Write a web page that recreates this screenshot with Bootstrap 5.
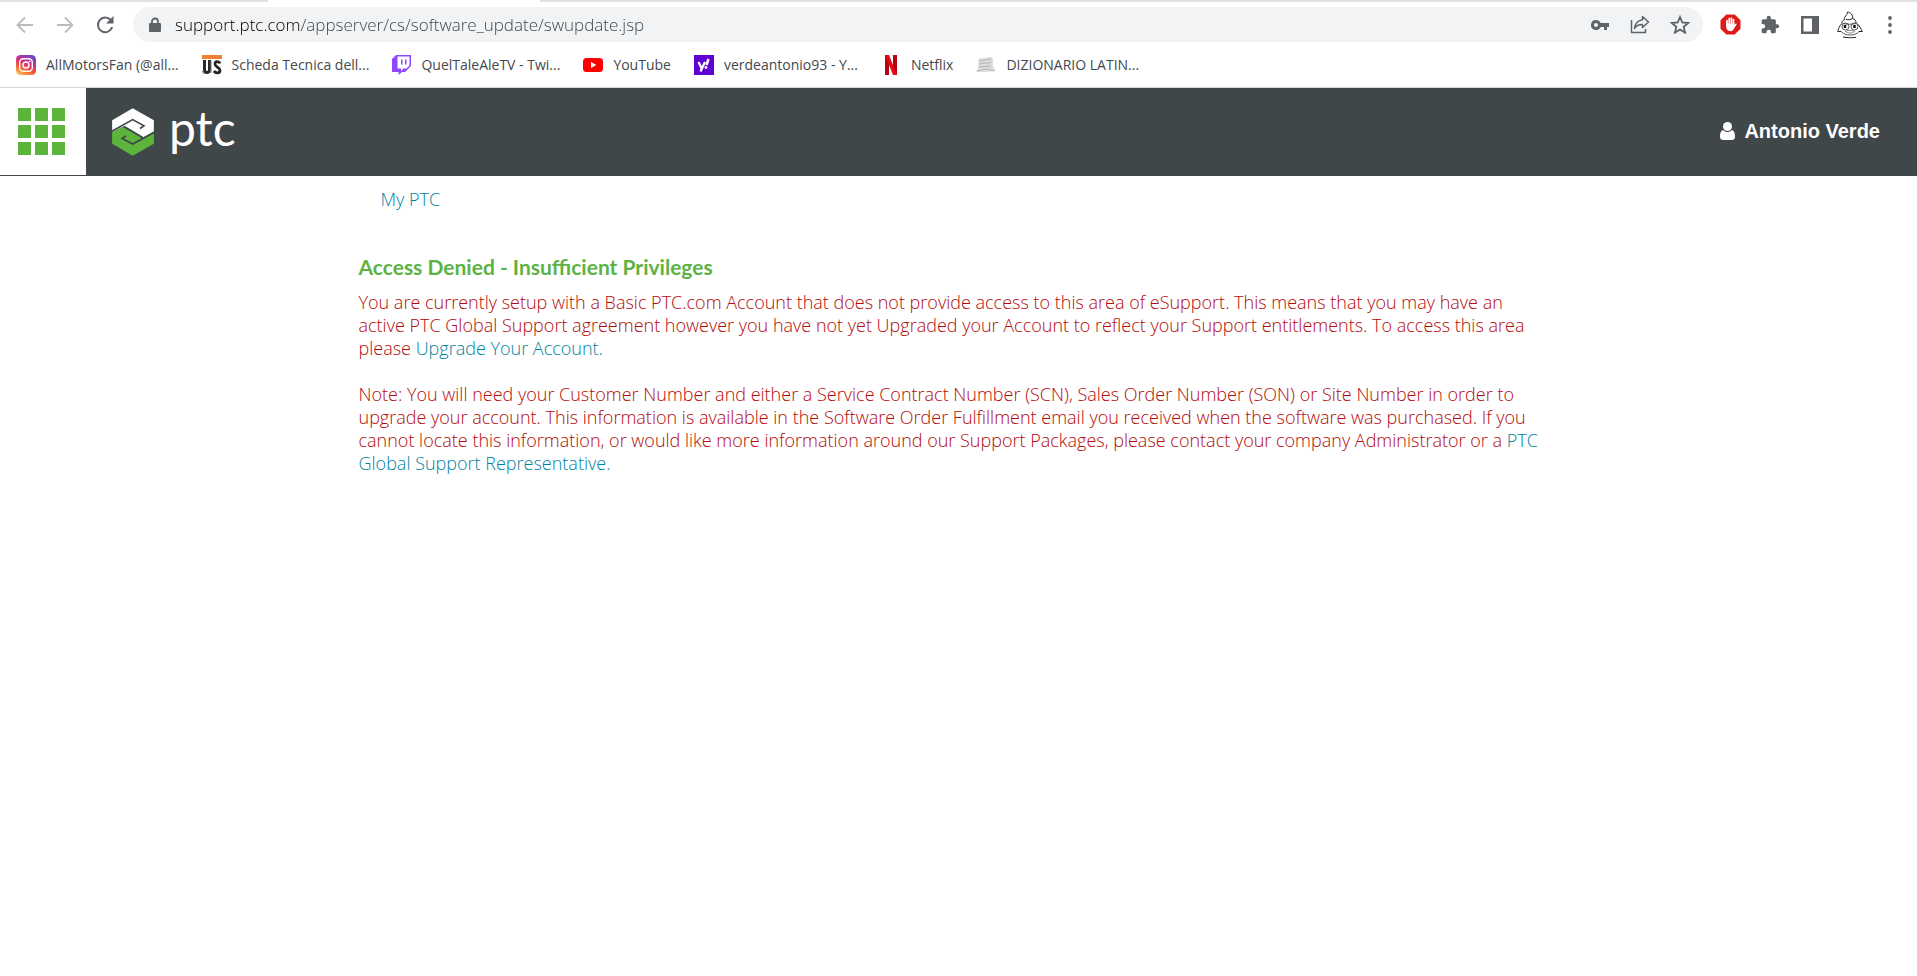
<!DOCTYPE html>
<html lang="en">
<head>
<meta charset="utf-8">
<meta name="viewport" content="width=device-width, initial-scale=1">
<title>PTC eSupport - Access Denied</title>
<link href="https://cdn.jsdelivr.net/npm/bootstrap@5.3.0/dist/css/bootstrap.min.css" rel="stylesheet">
<style>
body { font-family: "Open Sans", "Noto Sans", sans-serif; background: #fff; }
a { text-decoration: none; }
svg { display: block; flex: none; }

/* browser chrome */
.tab-edge { height: 2px; background: #dee1e6; }
.tab-lead { width: 268px; }
.tab-active { width: 272px; background: #fff; }
.tool-row { height: 45px; padding: 5px 7px 5px 5px; }
.tool-btn { width: 40px; height: 35px; padding: 0; border: 0; background: none; color: #5f6368; display: flex; align-items: center; justify-content: center; }
.tool-btn:disabled { color: #b9bbbe; }
.omnibox { height: 35px; margin: 0 7px 0 8px; padding: 0 3px 0 14px; border-radius: 18px; background: #f1f3f4; }
.omnibox input { min-width: 0; padding: 0; border: 0; outline: 0; font-family: "Open Sans", sans-serif; font-weight: 300; font-size: 17px; line-height: 24px; color: transparent; background: linear-gradient(90deg, #000 130px, #3c4044 130px); -webkit-background-clip: text; background-clip: text; }
.bookmarks { height: 41px; padding: 0 16px 5px; gap: 23px; border-bottom: 1px solid #d5d7da; }
.bookmarks a { display: flex; align-items: center; gap: 10px; color: #45484c; font-size: 14px; line-height: 20px; white-space: nowrap; }

/* site header */
.site-head { height: 88px; background: #3f4749; }
.app-switch { width: 86px; height: 87px; padding: 0 0 0 18px; border: 0; background: #fff; display: flex; align-items: center; }
.brand-link { margin-left: 26px; gap: 15px; color: #fff; }
.brand-text { padding-bottom: 8px; font-family: Lato, sans-serif; font-size: 48px; line-height: 52px; font-weight: 400; }
.user-link { margin-right: 37px; padding-bottom: 2px; gap: 9px; color: #fff; font-family: "Liberation Sans", Arial, sans-serif; font-weight: 700; font-size: 20px; line-height: 24px; }

/* page */
.page-wrap { max-width: 1200px; margin: 0 auto; padding-right: 8px; font-size: 18px; font-weight: 300; line-height: 23px; color: #b40a0a; }
.page-wrap a { color: #00839f; }
.crumbs { padding: 12px 22px; }
.page-wrap h1 { margin: 32px 0 12px; font-family: Lato, sans-serif; font-weight: 700; font-size: 21px; line-height: 24px; color: #5cb343; }
.page-wrap p { margin: 0 0 23px; }
</style>
</head>
<body>
<div class="tab-edge d-flex"><div class="tab-lead"></div><div class="tab-active"></div></div>

<div class="tool-row d-flex align-items-center">
  <button class="tool-btn" disabled aria-label="Back"><svg width="18" height="18" viewBox="0 0 18 18" fill="none" stroke="currentColor" stroke-width="1.8"><path d="M17 9H2M9 1.5 1.5 9 9 16.500"/></svg></button>
  <button class="tool-btn" disabled aria-label="Forward"><svg width="18" height="18" viewBox="0 0 18 18" fill="none" stroke="currentColor" stroke-width="1.8"><path d="M1 9h15M9 1.500 16.500 9 9 16.500"/></svg></button>
  <button class="tool-btn" aria-label="Reload"><svg width="18" height="18" viewBox="0 0 18 18"><path d="M14.700 4A7.300 7.300 0 1 0 16.200 11" fill="none" stroke="currentColor" stroke-width="2"/><path d="M17.500 0v7.500H10z" fill="currentColor"/></svg></button>
  <form class="omnibox d-flex align-items-center flex-grow-1" onsubmit="return false">
    <svg width="16" height="16" viewBox="0 0 16 16"><path d="M3 6h10a1 1 0 0 1 1 1v7a1 1 0 0 1-1 1H3a1 1 0 0 1-1-1V7a1 1 0 0 1 1-1z" fill="#5f6368"/><path d="M5 7V4.500a3 3 0 0 1 6 0V7" fill="none" stroke="#5f6368" stroke-width="1.800"/></svg>
    <input class="flex-grow-1 ms-2 ps-1" type="text" aria-label="Address" value="support.ptc.com/appserver/cs/software_update/swupdate.jsp">
    <button type="button" class="tool-btn" aria-label="Passwords"><svg width="18" height="12" viewBox="0 0 18 12"><path fill="currentColor" fill-rule="evenodd" d="M5 1a5 5 0 1 0 4.600 7H13v3h3V8h2V4H9.600A5 5 0 0 0 5 1zm0 3a2 2 0 1 1 0 4 2 2 0 0 1 0-4z"/></svg></button>
    <button type="button" class="tool-btn" aria-label="Share"><svg width="20" height="19" viewBox="0 0 20 19" fill="none" stroke="currentColor" stroke-width="1.500"><path d="M1.500 5v12.500h14V14"/><path d="M12.500 1.500 18.500 7l-6 5.500V9.500C9 9.300 6.500 10.500 4.500 13.500 5 9 8 5.200 12.500 4.700z" stroke-linejoin="round"/></svg></button>
    <button type="button" class="tool-btn" aria-label="Bookmark this tab"><svg width="20" height="19" viewBox="0 0 20 19"><path d="M10 2l2.300 5.500 5.900.5-4.500 3.900 1.400 5.800L10 14.600l-5.100 3.100 1.400-5.800L1.800 8l5.900-.5z" fill="none" stroke="currentColor" stroke-width="1.800"/></svg></button>
  </form>
  <button class="tool-btn" aria-label="AdBlock"><svg width="21" height="21" viewBox="0 0 21 21"><path d="M6.300.500h8.400l5.800 5.800v8.400l-5.800 5.800H6.300L.5 14.700V6.300z" fill="#dc1a16"/><path d="M7 11V6.500M9.200 10V4.500M11.400 10V4M13.500 10V5.500" stroke="#fff" stroke-width="1.700" stroke-linecap="round"/><path d="M6.100 9.500h8.300v1.500l1-1.200c.8-.6 1.500 0 1.200.8L14 14.500c-.8 1.900-1.800 2.700-3.700 2.700-2.800 0-4.200-2-4.200-4.700z" fill="#fff"/></svg></button>
  <button class="tool-btn" aria-label="Extensions"><svg width="20" height="20" viewBox="0 0 24 24"><path fill="currentColor" d="M20.500 11H19V7a2 2 0 0 0-2-2h-4V3.500a2.500 2.500 0 0 0-5 0V5H4a2 2 0 0 0-2 2v3.800h1.500a2.700 2.700 0 0 1 0 5.400H2V20a2 2 0 0 0 2 2h3.800v-1.500a2.700 2.700 0 0 1 5.400 0V22H17a2 2 0 0 0 2-2v-4h1.500a2.500 2.500 0 0 0 0-5z"/></svg></button>
  <button class="tool-btn" aria-label="Side panel"><svg width="18" height="18" viewBox="0 0 18 18"><path fill="currentColor" fill-rule="evenodd" d="M0 0h18v18H0zM2.500 2.500v13H11v-13z"/></svg></button>
  <button class="tool-btn" aria-label="Profile"><svg width="26" height="28" viewBox="0 0 26 28" fill="none" stroke="#555" stroke-width="1"><path stroke="#222" d="M10.500 1c0 2-1.500 3.500-2.500 5-.8 1-.8 2-.3 2.800M10.500 1c3 .5 6 3 5 6.500 2.500.5 3.500 2.500 3.500 4.500M7.700 8.500C5.500 9.500 4.500 11 5 13M9 8.500c2.500.5 5 0 6.500-1M4.500 13C2.500 15 1.500 17.500.7 20.500H4M20 12.500c2.500 2.500 4 5 5.300 8H22"/><path d="M6 12.500c4 1 9 1 13 0M4.500 20.500c2 2.500 5 3.500 8.500 3.500s7-1 9-3.500"/><circle cx="8.500" cy="15.500" r="3.500"/><circle cx="17.500" cy="15.500" r="3.500"/><path stroke="#888" d="M8.500 20.500c2-1.500 7-1.500 9 0-2 2-7 2-9 0z"/><path stroke="#222" d="M6 26c4 .8 9 1 13 .3"/><path d="M8 14v3M17.500 14v3" stroke="#111" stroke-width="2.500"/></svg></button>
  <button class="tool-btn" aria-label="Menu"><svg width="4" height="18" viewBox="0 0 4 18" fill="currentColor"><circle cx="2" cy="2" r="1.900"/><circle cx="2" cy="9" r="1.900"/><circle cx="2" cy="16" r="1.900"/></svg></button>
</div>

<nav class="bookmarks d-flex align-items-center" aria-label="Bookmarks">
  <a href="#"><svg width="20" height="20" viewBox="0 0 20 20"><defs><linearGradient id="ig" x1="0.200" y1="1" x2="0.700" y2="0"><stop offset="0" stop-color="#fdc04f"/><stop offset=".35" stop-color="#f4563c"/><stop offset=".65" stop-color="#cf2c8c"/><stop offset="1" stop-color="#6a48cf"/></linearGradient></defs><rect width="20" height="20" rx="4.500" fill="url(#ig)"/><rect x="3.700" y="3.700" width="12.600" height="12.600" rx="3.500" fill="none" stroke="#fff" stroke-width="1.400"/><circle cx="10" cy="10" r="3" fill="none" stroke="#fff" stroke-width="1.400"/><circle cx="13.700" cy="6.300" r=".9" fill="#fff"/></svg>AllMotorsFan (@all...</a>
  <a href="#"><svg width="20" height="20" viewBox="0 0 20 20"><path fill="#f08134" d="M0 0h20v4H0z"/><path d="M2.500 5v9.500c0 4 5 4 5 .5V5" fill="none" stroke="#2b2b2b" stroke-width="3"/><path d="M18 8.500c-1-2.500-5-2.500-5 .5 0 3.500 5 3 5 6.500 0 3-4.500 3-6 .5" fill="none" stroke="#222" stroke-width="2.800"/><path d="M0 16l2 3M9 6v12" stroke="#777"/></svg>Scheda Tecnica dell...</a>
  <a href="#"><svg width="19" height="20" viewBox="0 0 19 20"><path fill="#9146ff" d="M4 0h15v11l-6 6h-3l-3.500 3v-3H0V4z"/><path fill="#fff" d="M5.500 1.500h12v9l-3 3h-3L9 16v-2.500H5.500z"/><path fill="#9146ff" d="M9 4.500h1.500v5H9zM13 4.500h1.500v5H13z"/></svg>QuelTaleAleTV - Twi...</a>
  <a href="#"><svg width="20" height="20" viewBox="0 0 20 20"><rect y="3" width="20" height="14" rx="3.500" fill="#f00"/><path fill="#fff" d="M8 7l5.300 3L8 13z"/></svg>YouTube</a>
  <a href="#"><svg width="20" height="20" viewBox="0 0 20 20"><path fill="#5f01d1" d="M0 0h20v20H0z"/><path d="M4.500 7l3 6M11 7l-4.500 9.500" stroke="#fff" stroke-width="2.300"/><path d="M14.500 4l-2 6" stroke="#fff" stroke-width="2.500"/><circle cx="12" cy="12.500" r="1.400" fill="#fff"/></svg>verdeantonio93 - Y...</a>
  <a href="#"><svg width="20" height="20" viewBox="0 0 20 20"><path fill="#b1060f" d="M4 0h4v20H4zM12 0h4v20h-4z"/><path fill="#e50914" d="M4 0h4l8 20h-4z"/></svg>Netflix</a>
  <a href="#"><svg width="20" height="16" viewBox="0 0 20 16"><path fill="#dcdcdc" d="M3 1.500 15 0l2 2v7l3 5-12 1H0l2-3z"/><path d="M3 4l12-2M2.500 7l13-1.500M3 10l12-1M1 14l9-2 8 2" stroke="#b4b4b4" fill="none"/></svg>DIZIONARIO LATIN...</a>
</nav>

<header class="site-head d-flex align-items-start">
  <button class="app-switch" aria-label="Applications"><svg width="47" height="47" viewBox="0 0 47 47" fill="#5cb53a"><path d="M0 0h13v13H0zM17 0h13v13H17zM34 0h13v13H34zM0 17h13v13H0zM17 17h13v13H17zM34 17h13v13H34zM0 34h13v13H0zM17 34h13v13H17zM34 34h13v13H34z"/></svg></button>
  <a class="brand-link d-flex align-items-center align-self-center" href="#"><svg width="42" height="48" viewBox="336 84 126 145"><path fill="#fff" d="M336 121 398 85 462 121V155L430 173 372 139 336 158z"/><path fill="#5cb53a" d="M336 158 367 141 427 175 462 156V192L398 228 336 192z"/><path fill="none" stroke="#3f4749" stroke-width="5" d="M334 155 398 119 432 138 420 146M372 140 428 173M464 157 398 193 366 176 378 168"/></svg><span class="brand-text">ptc</span></a>
  <a class="user-link d-flex align-items-center align-self-center ms-auto" href="#"><svg width="15" height="18" viewBox="0 0 15 18" fill="#fff"><circle cx="7.500" cy="4.500" r="4.500"/><path d="M3.200 8c2.500 2.700 6.100 2.700 8.600 0 2.300.5 3.200 3 3.200 6.500 0 2-1 3.500-3 3.500H3c-2 0-3-1.500-3-3.500C0 11 .9 8.500 3.200 8z"/></svg>Antonio Verde</a>
</header>

<main class="page-wrap">
  <nav class="crumbs" aria-label="Breadcrumb"><a href="#">My PTC</a></nav>
  <h1>Access Denied - Insufficient Privileges</h1>
  <p>You are currently setup with a Basic PTC.com Account that does not provide access to this area of eSupport. This means that you may have an active PTC Global Support agreement however you have not yet Upgraded your Account to reflect your Support entitlements. To access this area please <a href="#">Upgrade Your Account.</a></p>
  <p>Note: You will need your Customer Number and either a Service Contract Number (SCN), Sales Order Number (SON) or Site Number in order to upgrade your account. This information is available in the Software Order Fulfillment email you received when the software was purchased. If you cannot locate this information, or would like more information around our Support Packages, please contact your company Administrator or a <a href="#">PTC Global Support Representative.</a></p>
</main>
<script src="https://cdn.jsdelivr.net/npm/bootstrap@5.3.0/dist/js/bootstrap.bundle.min.js"></script>
</body>
</html>
